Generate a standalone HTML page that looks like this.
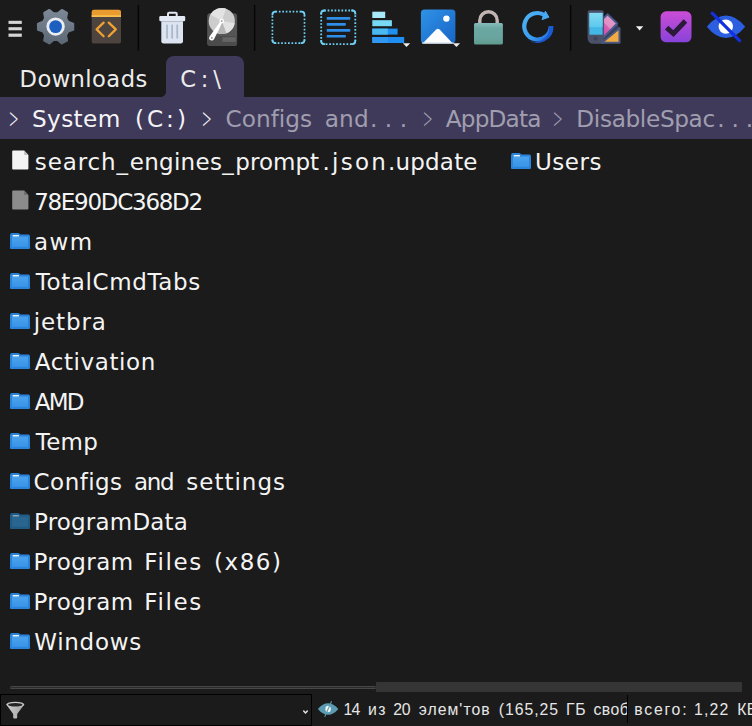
<!DOCTYPE html>
<html lang="uk">
<head>
<meta charset="utf-8">
<title>C:\</title>
<style>
*{box-sizing:border-box;margin:0;padding:0}
html,body{width:752px;height:726px;overflow:hidden;background:#1b1b1b}
body{position:relative;font-family:"DejaVu Sans Mono","Liberation Mono",monospace;color:#f2f2f2}
.abs{position:absolute}
.t{position:absolute;white-space:pre;line-height:1}
/* toolbar */
#toolbar{position:absolute;left:0;top:0;width:752px;height:57px;background:#1b1b1b}
.sep{position:absolute;top:5px;width:2px;height:46px;background:#050505}
.ic{position:absolute;overflow:visible}
/* tabs */
#tabs{position:absolute;left:0;top:57px;width:752px;height:40px}
#tab-active{position:absolute;left:166px;top:-1px;width:78px;height:42px;background:#3f3a5a;border-radius:8px 8px 0 0}
#tab-active:before{content:"";position:absolute;left:-5px;bottom:1px;width:5px;height:5px;background:radial-gradient(circle at 0 0,rgba(63,58,90,0) 4.6px,#3f3a5a 5.2px)}
.tabtxt{font-family:"DejaVu Sans","Liberation Sans",sans-serif;font-size:22.6px;top:10.8px;word-spacing:5px;color:#ececec}
#crumb{position:absolute;left:0;top:96.7px;width:752px;height:42px;background:#3f3a5a}
.cr{font-family:"DejaVu Sans","Liberation Sans",sans-serif;font-size:23.2px;top:10.3px;color:#f4f4f6;word-spacing:5px}
.cr.dim,.chev.dim{color:#a09eaf}
.chev{font-family:"Liberation Serif","DejaVu Serif",serif;font-size:20px;top:12.5px;color:#f4f4f6;transform:scale(.8,1.5);transform-origin:50% 55%}
/* list */
#list{position:absolute;left:0;top:141px;width:752px;height:540px}
.row{position:absolute;left:0;height:40px;width:752px}
.row .nm{position:absolute;left:35px;top:9.5px;font-family:"DejaVu Sans","Liberation Sans",sans-serif;font-size:23px;word-spacing:5px;line-height:1;white-space:pre;color:#f4f4f4}
.row svg.fi{position:absolute;left:9px;top:11px}
.row svg.fi.f{left:10.7px;top:9.4px}
#hscroll{position:absolute;left:0;top:681px;width:752px;height:12px}
#hscroll .trk{position:absolute;left:10px;top:5px;width:366px;height:3px;background:#2b2b2b;border:1px solid #474747;border-width:1px 0;border-radius:1.5px}
#hscroll .thumb{position:absolute;left:376px;top:1px;width:366px;height:10px;background:#353535;border-radius:1px}
#status{position:absolute;left:0;top:693px;width:752px;height:33px}
#filter{position:absolute;left:0;top:1px;width:312px;height:32px;border:1px solid #000;background:#1b1b1b}
#st1{position:absolute;left:343px;top:0;width:284px;height:33px;overflow:hidden}
#st2{position:absolute;left:633px;top:0;width:119px;height:33px;overflow:hidden}
#stsep{position:absolute;left:627px;top:2px;width:1px;height:28px;background:#000}
.st{font-family:"Liberation Sans","DejaVu Sans",sans-serif;font-size:15.8px;top:9px;color:#e6e6e6;word-spacing:4px}
</style>
</head>
<body>
<svg width="0" height="0" style="position:absolute">
 <defs>
  <linearGradient id="fg" x1="0" y1="0" x2="0" y2="1"><stop offset="0" stop-color="#4aa3ee"/><stop offset="1" stop-color="#3a94e6"/></linearGradient>
  <g id="g-dir">
   <path d="M1 3.2 Q1 1 3 1 H9.5 L11.5 2.6 H19.4 Q21 2.6 21 4.2 V16 Q21 17 20 17 H2 Q1 17 1 16 Z" fill="#2a84dc"/>
   <rect x="3" y="4.6" width="16" height="10.2" fill="url(#fg)"/>
   <rect x="3.6" y="2.9" width="6.4" height="1.5" rx=".4" fill="#eaf4fd"/>
  </g>
  <g id="g-dird">
   <path d="M1 3.2 Q1 1 3 1 H9.5 L11.5 2.6 H19.4 Q21 2.6 21 4.2 V16 Q21 17 20 17 H2 Q1 17 1 16 Z" fill="#1e5b85"/>
   <rect x="3" y="4.6" width="16" height="10.2" fill="#29658e"/>
   <rect x="3.6" y="2.9" width="6.4" height="1.5" rx=".4" fill="#8da2b0"/>
  </g>
  <g id="g-file">
   <path d="M1.2 1.6 Q1.2 .6 2.2 .6 H13.1 L17.4 4.9 V18.5 Q17.4 19.5 16.4 19.5 H2.2 Q1.2 19.5 1.2 18.5 Z" fill="#f3f3f3"/>
   <path d="M13.1 .6 L17.4 4.9 H13.9 Q13.1 4.9 13.1 4.1 Z" fill="#bdbdbd"/>
  </g>
  <g id="g-fileg">
   <path d="M1.2 1.6 Q1.2 .6 2.2 .6 H13.1 L17.4 4.9 V18.5 Q17.4 19.5 16.4 19.5 H2.2 Q1.2 19.5 1.2 18.5 Z" fill="#8c8c8c"/>
   <path d="M13.1 .6 L17.4 4.9 H13.9 Q13.1 4.9 13.1 4.1 Z" fill="#6c6c74"/>
  </g>
 </defs>
</svg>
<div id="toolbar">
<svg class="ic" style="left:0;top:0" width="752" height="57" viewBox="0 0 752 57">
 <defs>
  <linearGradient id="gGear" x1="0" y1="0" x2="0" y2="1"><stop offset="0" stop-color="#7c8896"/><stop offset="1" stop-color="#5c6874"/></linearGradient>
  <linearGradient id="gImg" x1="0" y1="0" x2="1" y2="1"><stop offset="0" stop-color="#2f92e6"/><stop offset="1" stop-color="#1765c6"/></linearGradient>
  <linearGradient id="gChk" x1="0" y1="0" x2="0" y2="1"><stop offset="0" stop-color="#cb4dd6"/><stop offset="1" stop-color="#8843da"/></linearGradient>
  <linearGradient id="gCy" x1="0" y1="0" x2="0" y2="1"><stop offset="0" stop-color="#84dbf3"/><stop offset="1" stop-color="#5cc8ec"/></linearGradient>
  <linearGradient id="gPk" gradientUnits="userSpaceOnUse" x1="614" y1="19" x2="602" y2="31"><stop offset="0" stop-color="#e79ccb"/><stop offset=".55" stop-color="#e08cc4"/><stop offset=".6" stop-color="#d662b6"/><stop offset="1" stop-color="#d050b0"/></linearGradient>
  <linearGradient id="gRef" x1="0" y1="0" x2="1" y2="1"><stop offset="0" stop-color="#4fb3f6"/><stop offset=".6" stop-color="#3a9cee"/><stop offset="1" stop-color="#1f68dc"/></linearGradient>
  <linearGradient id="gLock" x1="0" y1="0" x2="0" y2="1"><stop offset="0" stop-color="#86bcbb"/><stop offset=".25" stop-color="#6ca8a2"/><stop offset=".7" stop-color="#69a59e"/><stop offset="1" stop-color="#5e9a8c"/></linearGradient>
 </defs>
 <!-- hamburger -->
 <g fill="#d7d5d3"><rect x="8.5" y="20.8" width="13.3" height="3.1"/><rect x="8.5" y="27.2" width="13.3" height="3.1"/><rect x="8.5" y="33.6" width="13.3" height="3.2"/></g>
 <!-- gear -->
 <path d="M68.11 21.90 L73.16 23.76 L73.16 29.64 L68.11 31.50 L66.01 35.13 L66.92 40.43 L61.83 43.37 L57.70 39.94 L53.50 39.94 L49.37 43.37 L44.28 40.43 L45.19 35.13 L43.09 31.50 L38.04 29.64 L38.04 23.76 L43.09 21.90 L45.19 18.27 L44.28 12.97 L49.37 10.03 L53.50 13.46 L57.70 13.46 L61.83 10.03 L66.92 12.97 L66.01 18.27Z" fill="url(#gGear)" stroke="url(#gGear)" stroke-width="2.2" stroke-linejoin="round"/>
 <circle cx="55.6" cy="26.6" r="9.2" fill="#e9edf1"/>
 <circle cx="55.6" cy="26.6" r="6.4" fill="#1c5fc0"/>
 <!-- code -->
 <rect x="91.7" y="9.8" width="29.3" height="33.8" rx="2.2" fill="#4d433f"/>
 <path d="M91.7 17 V12 Q91.7 9.8 93.9 9.8 H118.8 Q121 9.8 121 12 V17 Z" fill="#e99b30"/>
 <rect x="91.7" y="15.2" width="29.3" height="1.8" fill="#f7c04e"/>
 <path d="M103.6 22.6 L96.6 29.4 L103.6 36.3 M108.8 22.6 L115.8 29.4 L108.8 36.3" fill="none" stroke="#f0a232" stroke-width="2.3" stroke-linecap="round" stroke-linejoin="round"/>
 <!-- separators -->
 <g fill="#060606"><rect x="137.7" y="4.8" width="1.4" height="46"/><rect x="253.9" y="4.8" width="1.4" height="46"/><rect x="569.9" y="4.8" width="1.4" height="46"/></g>
 <!-- trash -->
 <path d="M168 16 V13.8 Q168 12.7 169.1 12.7 H175.6 Q176.7 12.7 176.7 13.8 V16" fill="none" stroke="#dfe6f3" stroke-width="2"/>
 <rect x="159.3" y="16" width="25.9" height="5.3" rx="1.2" fill="#e3e9f5"/>
 <path d="M161.3 21.3 H183 V41.2 Q183 43.6 180.6 43.6 H163.7 Q161.3 43.6 161.3 41.2 Z" fill="#dce4f2"/>
 <g fill="#a9b6c6"><rect x="166.2" y="24.6" width="1.7" height="14"/><rect x="171.3" y="24.6" width="1.7" height="14"/><rect x="176.4" y="24.6" width="1.7" height="14"/></g>
 <!-- disk -->
 <rect x="207.2" y="13.3" width="29.9" height="32.6" rx="3" fill="#555555"/>
 <rect x="207.2" y="36" width="29.9" height="9.9" rx="3" fill="#4b4b4b"/>
 <rect x="222.5" y="37.2" width="13.3" height="4.7" fill="#646464"/>
 <circle cx="221.8" cy="21" r="13.1" fill="#cdcdcd"/>
 <path d="M221.8 21 L210.4 14.5 A13.1 13.1 0 0 1 226 8.6 Z" fill="#e3e3e3"/>
 <path d="M221.8 21 L234.7 23.3 A13.1 13.1 0 0 1 226.3 33.3 Z" fill="#e2e2e2"/>
 <path d="M221.8 21 L226.3 33.3 A13.1 13.1 0 0 1 218 33.5 Z" fill="#b6b6b6"/>
 <path d="M221 20.4 L209.6 36.4 A2.6 2.6 0 0 0 214 39.3 L222.8 21.3 Z" fill="#ffffff"/>
 <circle cx="221.8" cy="21" r="2.3" fill="#ffffff"/><circle cx="221.8" cy="21" r="1" fill="#a8a8a8"/>
 <circle cx="211.8" cy="37.9" r="0.9" fill="#8a8a8a"/>
 <!-- select -->
 <rect x="272.4" y="11.7" width="32.1" height="31.4" rx="3" fill="none" stroke="#6fd0f5" stroke-width="1.7" stroke-dasharray="1.7 1.75" stroke-dashoffset="0"/>
 <g fill="none" stroke="#6fd0f5" stroke-width="1.7"><path d="M272.4 15.6 V14.7 Q272.4 11.7 275.4 11.7 H276.3"/><path d="M300.6 11.7 H301.5 Q304.5 11.7 304.5 14.7 V15.6"/><path d="M304.5 39.2 V40.1 Q304.5 43.1 301.5 43.1 H300.6"/><path d="M276.3 43.1 H275.4 Q272.4 43.1 272.4 40.1 V39.2"/></g>
 <!-- select all -->
 <rect x="321.2" y="10.5" width="34.1" height="33.6" rx="3" fill="none" stroke="#6fd0f5" stroke-width="1.8" stroke-dasharray="1.7 1.75"/>
 <g fill="none" stroke="#6fd0f5" stroke-width="1.8"><path d="M321.2 14.6 V13.5 Q321.2 10.5 324.2 10.5 H325.3"/><path d="M351.2 10.5 H352.3 Q355.3 10.5 355.3 13.5 V14.6"/><path d="M355.3 40 V41.1 Q355.3 44.1 352.3 44.1 H351.2"/><path d="M325.3 44.1 H324.2 Q321.2 44.1 321.2 41.1 V40"/></g>
 <g fill="#2f8fe8"><rect x="326.7" y="17" width="23.6" height="2.7" rx=".6"/><rect x="326.7" y="23" width="19.1" height="2.7" rx=".6"/><rect x="326.7" y="29" width="23.6" height="2.7" rx=".6"/><rect x="326.7" y="34.9" width="19.1" height="2.7" rx=".6"/></g>
 <!-- sort -->
 <rect x="372.3" y="11.7" width="12.9" height="6.3" fill="#a6e9f8"/>
 <rect x="372.3" y="20.2" width="19.6" height="6" fill="#78d9f5"/>
 <rect x="372.3" y="28.6" width="25.3" height="6" fill="#2090f0"/><rect x="372.3" y="28.6" width="15.6" height="6" fill="#49b9f0"/>
 <rect x="372.3" y="37" width="31.9" height="6" fill="#1f8ef0"/><rect x="372.3" y="37" width="15.6" height="6" fill="#3098f2"/>
 <path d="M402.9 43.2 H410.2 L406.55 46.9 Z" fill="#ededed"/>
 <!-- image -->
 <rect x="420.9" y="9.6" width="34.5" height="34" rx="3.6" fill="url(#gImg)"/>
 <path d="M422.6 43.6 L436.2 29.6 Q437.9 27.9 439.6 29.6 L452.8 43.6 Z" fill="#fbfcfd"/>
 <rect x="422" y="42.4" width="31.6" height="1.2" fill="#d8dde4"/>
 <circle cx="446.4" cy="18.6" r="3.2" fill="#ffffff"/>
 <path d="M452.8 43.2 H460.1 L456.45 46.9 Z" fill="#ededed"/>
 <!-- lock -->
 <path d="M479.8 23.5 V20.4 A8.7 8.7 0 0 1 497.2 20.4 V23.5" fill="none" stroke="#c1b5b3" stroke-width="3.4"/>
 <rect x="474" y="22.9" width="28.9" height="21.6" rx="1.6" fill="url(#gLock)"/>
 <!-- refresh -->
 <path d="M545 15.4 A13.2 13.2 0 1 0 550.7 26.2" fill="none" stroke="url(#gRef)" stroke-width="4.2"/>
 <path d="M553.5 26 A16.2 16.2 0 0 1 527.6 39.6 A14 14 0 0 0 549 26 Z" fill="#1b5ad6"/>
 <path d="M545.4 11.2 L548.9 17.2 L542 19.6 Z" fill="#46abf4" stroke="#46abf4" stroke-width="1" stroke-linejoin="round"/>
 <!-- palette -->
 <path d="M617 23.3 L619.5 28.2 L601.8 42.8 L603 37.3 Z" fill="#363e5c"/>
 <path d="M607.5 14.3 L617.2 23.5 L603 37.9 V18.8 Z" fill="url(#gPk)" stroke="#4a5a8c" stroke-width="1.9" stroke-linejoin="round"/>
 <path d="M587.6 12.4 Q587.6 10.2 589.8 10.2 H601.6 Q603.8 10.2 603.8 12.4 V43.8 H593.6 Q587.6 43.8 587.6 37.8 Z" fill="#4b5169"/>
 <rect x="589.4" y="12.9" width="13.2" height="21.8" fill="#43b7e6"/>
 <rect x="589.4" y="12.9" width="13.2" height="14.2" fill="url(#gCy)"/>
 <circle cx="595.6" cy="38.6" r="2.1" fill="#3e4358"/>
 <path d="M619.5 28.2 V42.8 H601.8 Z" fill="#f2ab42" stroke="#4a5880" stroke-width="2" stroke-linejoin="round"/>
 <path d="M635.9 26.3 H643.3 L639.6 30.4 Z" fill="#f2f2f2"/>
 <!-- check -->
 <rect x="660.6" y="11.3" width="30.9" height="31" rx="5.6" fill="url(#gChk)"/>
 <path d="M666.6 27.6 L673.4 33.6 L685.4 21" fill="none" stroke="#2b1a3a" stroke-width="5" stroke-linejoin="miter"/>
 <!-- eye -->
 <path d="M706.8 26.8 Q716 15.6 726 15.6 Q736 15.6 745.2 26.8 Q736 38 726 38 Q716 38 706.8 26.8 Z" fill="#2b5fe0"/>
 <circle cx="725.8" cy="26.6" r="7.2" fill="#ffffff"/>
 <path d="M712.2 13.2 L739.6 40.6" stroke="#1230df" stroke-width="3.2" stroke-linecap="round"/>
</svg>
</div>
<div id="tabs">
  <div id="tab-active"></div>
  <span class="t tabtxt" id="tb1" style="left:19.56px;letter-spacing:0.45px">Downloads</span>
  <span class="t tabtxt" id="tb2" style="left:180.18px;letter-spacing:4.87px">C:\</span>
</div>
<div id="crumb">
  <span class="t chev" style="left:7.8px">&gt;</span>
  <span class="t cr" id="c1a" style="left:32.04px;letter-spacing:0.35px">System</span> <span class="t cr" id="c1b" style="left:134.88px;letter-spacing:2.99px">(C:)</span>
  <span class="t chev" style="left:200.8px">&gt;</span>
  <span class="t cr dim" id="c2a" style="left:225.44px;letter-spacing:0.04px">Configs</span> <span class="t cr dim" id="c2b" style="left:324.82px;letter-spacing:0.10px">and</span><span class="t cr dim" id="c2c" style="left:370.02px;letter-spacing:7.44px">...</span>
  <span class="t chev dim" style="left:421.5px">&gt;</span>
  <span class="t cr dim" id="c3" style="left:445.84px;letter-spacing:-0.85px">AppData</span>
  <span class="t chev dim" style="left:552.4px">&gt;</span>
  <span class="t cr dim" id="c4a" style="left:576.32px;letter-spacing:-0.35px">DisableSpac</span><span class="t cr dim" id="c4c" style="left:717.3px;letter-spacing:6.9px">...</span>
</div>
<div id="hscroll"><div class="trk"></div><div class="thumb"></div></div>
<div id="list">
  <div class="row" style="top:0px"><svg class="fi f" width="18" height="20" viewBox="0 0 18 20"><use href="#g-file"/></svg><span class="nm" id="r0_0" style="left:34.80px;letter-spacing:0.89px">search_</span><span class="nm" id="r0_1" style="left:129.70px;letter-spacing:0.30px">engines_</span><span class="nm" id="r0_2" style="left:235.36px;letter-spacing:0.02px">prompt</span><span class="nm" id="r0_3" style="left:322.46px;letter-spacing:2.29px">.json</span><span class="nm" id="r0_4" style="left:387.92px;letter-spacing:0.21px">.update</span></div>
  <div class="row" style="top:40px"><svg class="fi f" width="18" height="20" viewBox="0 0 18 20"><use href="#g-fileg"/></svg><span class="nm" id="r1_0" style="left:34.16px;letter-spacing:-1.28px">78E90DC368D2</span></div>
  <div class="row" style="top:80px"><svg class="fi " width="22" height="18" viewBox="0 0 22 18"><use href="#g-dir"/></svg><span class="nm" id="r2_0" style="left:34.06px;letter-spacing:1.40px">awm</span></div>
  <div class="row" style="top:120px"><svg class="fi " width="22" height="18" viewBox="0 0 22 18"><use href="#g-dir"/></svg><span class="nm" id="r3_0" style="left:35.76px;letter-spacing:0.61px">TotalCmdTabs</span></div>
  <div class="row" style="top:160px"><svg class="fi " width="22" height="18" viewBox="0 0 22 18"><use href="#g-dir"/></svg><span class="nm" id="r4_0" style="left:33.66px;letter-spacing:0.91px">jetbra</span></div>
  <div class="row" style="top:200px"><svg class="fi " width="22" height="18" viewBox="0 0 22 18"><use href="#g-dir"/></svg><span class="nm" id="r5_0" style="left:34.76px;letter-spacing:0.60px">Activation</span></div>
  <div class="row" style="top:240px"><svg class="fi " width="22" height="18" viewBox="0 0 22 18"><use href="#g-dir"/></svg><span class="nm" id="r6_0" style="left:34.76px;letter-spacing:-1.85px">AMD</span></div>
  <div class="row" style="top:280px"><svg class="fi " width="22" height="18" viewBox="0 0 22 18"><use href="#g-dir"/></svg><span class="nm" id="r7_0" style="left:35.76px;letter-spacing:0.28px">Temp</span></div>
  <div class="row" style="top:320px"><svg class="fi " width="22" height="18" viewBox="0 0 22 18"><use href="#g-dir"/></svg><span class="nm" id="r8_0" style="left:33.62px;letter-spacing:0.45px">Configs</span> <span class="nm" id="r8_1" style="left:133.88px;letter-spacing:-1.30px">and</span> <span class="nm" id="r8_2" style="left:186.26px;letter-spacing:1.01px">settings</span></div>
  <div class="row" style="top:360px"><svg class="fi d" width="22" height="18" viewBox="0 0 22 18"><use href="#g-dird"/></svg><span class="nm" id="r9_0" style="left:34.02px;letter-spacing:0.19px">ProgramData</span></div>
  <div class="row" style="top:400px"><svg class="fi " width="22" height="18" viewBox="0 0 22 18"><use href="#g-dir"/></svg><span class="nm" id="r10_0" style="left:33.46px;letter-spacing:0.44px">Program</span> <span class="nm" id="r10_1" style="left:144.28px;letter-spacing:1.65px">Files</span> <span class="nm" id="r10_2" style="left:214.08px;letter-spacing:1.51px">(x86)</span></div>
  <div class="row" style="top:440px"><svg class="fi " width="22" height="18" viewBox="0 0 22 18"><use href="#g-dir"/></svg><span class="nm" id="r11_0" style="left:33.46px;letter-spacing:0.44px">Program</span> <span class="nm" id="r11_1" style="left:144.28px;letter-spacing:1.65px">Files</span></div>
  <div class="row" style="top:480px"><svg class="fi " width="22" height="18" viewBox="0 0 22 18"><use href="#g-dir"/></svg><span class="nm" id="r12_0" style="left:34.34px;letter-spacing:0.69px">Windows</span></div>
  <div class="row" style="top:0;left:501px;width:251px"><svg class="fi " width="22" height="18" viewBox="0 0 22 18"><use href="#g-dir"/></svg><span class="nm" id="r13_0" style="left:34.04px;letter-spacing:0.50px">Users</span></div>
</div>
<div id="status">
  <div id="filter"></div>
  <svg class="ic" style="left:0;top:0" width="345" height="33" viewBox="0 693 345 33">
   <defs><linearGradient id="gFun" x1="0" y1="0" x2="1" y2="0"><stop offset="0" stop-color="#cdcdcd"/><stop offset="1" stop-color="#a2a2a2"/></linearGradient></defs>
   <path d="M6.3 704.6 L13.2 714 V717.4 Q13.2 718.4 14.2 718.4 H16.2 Q17.2 718.4 17.2 717.4 V714 L24.3 704.6 Z" fill="url(#gFun)"/>
   <ellipse cx="15.3" cy="704.5" rx="9" ry="2.8" fill="#c9c9c9"/>
   <ellipse cx="15.3" cy="704.7" rx="7.2" ry="1.8" fill="#242424"/>
   <path d="M303.7 711 L305.5 713 L307.3 711" fill="none" stroke="#e2e2e2" stroke-width="1.5" stroke-linecap="round" stroke-linejoin="round"/>
   <path d="M317.9 709 Q322.6 703.2 328.1 703.2 Q333.6 703.2 338.3 709 Q333.6 714.8 328.1 714.8 Q322.6 714.8 317.9 709 Z" fill="#5b9bb2"/>
   <ellipse cx="328.1" cy="709" rx="2.7" ry="3.2" fill="#f4f7f8"/>
   <path d="M331.6 701.2 L324.7 716.8" stroke="#5b9bb2" stroke-width="1.1"/>
  </svg>
  <div id="st1"><span class="t st" id="sa0" style="left:0.54px;letter-spacing:-0.94px">14</span> <span class="t st" id="sa1" style="left:24.96px;letter-spacing:1.58px">из</span> <span class="t st" id="sa2" style="left:50.18px;letter-spacing:-0.22px">20</span> <span class="t st" id="sa3" style="left:75.76px;letter-spacing:1.01px">элем'тов</span> <span class="t st" id="sa4" style="left:155.82px;letter-spacing:0.95px">(165,25</span> <span class="t st" id="sa5" style="left:223.10px;letter-spacing:0.68px">ГБ</span> <span class="t st" id="sa6" style="left:250.48px;letter-spacing:0.50px">своб</span></div>
  <div id="stsep"></div>
  <div id="st2"><span class="t st" id="sb0" style="left:1.26px;letter-spacing:1.76px">всего:</span> <span class="t st" id="sb1" style="left:61.04px;letter-spacing:1.16px">1,22</span> <span class="t st" id="sb2" style="left:104.18px;letter-spacing:0.50px">КБ</span></div>
</div>
</body>
</html>
